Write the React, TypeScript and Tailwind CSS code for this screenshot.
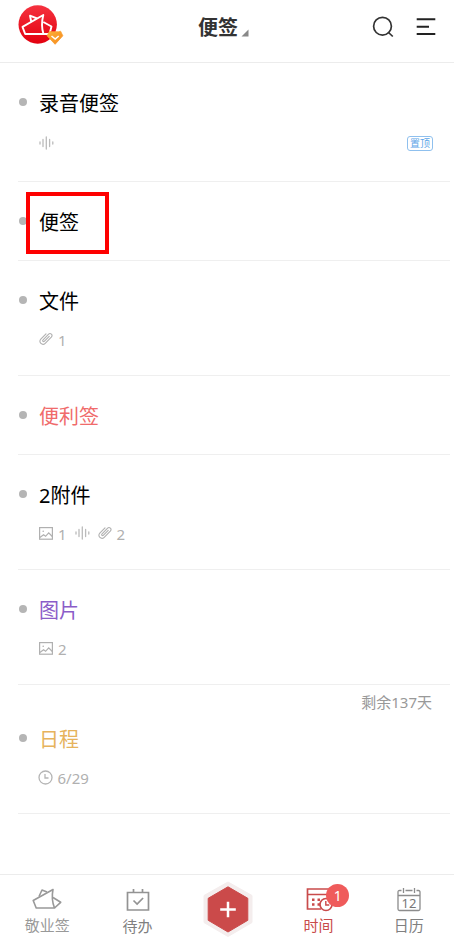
import React from "react";

type Meta = { kind: "image" | "voice" | "clip" | "clock"; text?: string };

type Note = {
  title: string;
  color: string;
  height: string;
  meta: Meta[];
  pinned?: boolean;
  marked?: boolean;
  remain?: string;
};

const notes: Note[] = [
  {
    title: "录音便签",
    color: "text-black",
    height: "h-[119px]",
    meta: [{ kind: "voice" }],
    pinned: true,
  },
  {
    title: "便签",
    color: "text-black",
    height: "h-[79px]",
    meta: [],
    marked: true,
  },
  {
    title: "文件",
    color: "text-black",
    height: "h-[115px]",
    meta: [{ kind: "clip", text: "1" }],
  },
  { title: "便利签", color: "text-[#f06b6b]", height: "h-[79px]", meta: [] },
  {
    title: "2附件",
    color: "text-black",
    height: "h-[115px]",
    meta: [
      { kind: "image", text: "1" },
      { kind: "voice" },
      { kind: "clip", text: "2" },
    ],
  },
  {
    title: "图片",
    color: "text-[#8a5cc8]",
    height: "h-[115px]",
    meta: [{ kind: "image", text: "2" }],
  },
  {
    title: "日程",
    color: "text-[#e6b35c]",
    height: "h-[129px]",
    meta: [{ kind: "clock", text: "6/29" }],
    remain: "剩余137天",
  },
];

const MetaIcon: React.FC<{ kind: Meta["kind"] }> = ({ kind }) => {
  if (kind === "voice") {
    return (
      <svg width="15" height="14" viewBox="0 0 15 14" fill="none" stroke="#bbb" strokeWidth="1.3" strokeLinecap="round">
        <path d="M1 6v2M4 3.5v7M7.3 1v12M10.6 3.5v7M13.8 6v2" />
      </svg>
    );
  }
  if (kind === "clip") {
    return (
      <svg width="14" height="14" viewBox="0 0 14 14" fill="none" stroke="#b0b0b0" strokeWidth="1.1" strokeLinecap="round">
        <path d="M10.200 4.300 5.500 9.200c-1.100 1.100-2.500-.2-1.400-1.400L9.400 2.300c2-2 4.900.6 2.900 2.800L6.200 11.300C3.400 14.200-1 10.200 1.800 7.200L7 1.900" />
      </svg>
    );
  }
  if (kind === "image") {
    return (
      <svg width="14" height="13" viewBox="0 0 14 13" fill="none" stroke="#b0b0b0" strokeWidth="1.200">
        <rect x="0.6" y="0.6" width="12.8" height="11.6" />
        <path d="M.8 10.600 4.600 7.800l2 1.500 3.100-3.500 3.600 3.700" />
        <circle cx="4.200" cy="4.200" r="0.800" fill="#b0b0b0" stroke="none" />
      </svg>
    );
  }
  return (
    <svg width="15" height="15" viewBox="0 0 15 15" fill="none" stroke="#b5b5b5" strokeWidth="1.300">
      <circle cx="7.500" cy="7.500" r="6.500" />
      <path d="M7 4v4h3.500" />
    </svg>
  );
};

const NoteRow: React.FC<{ note: Note }> = ({ note }) => {
  return (
    <li
      className={`relative ml-[18px] mr-1 border-b border-[#efefef] ${note.height} ${
        note.remain ? "pt-[6px]" : "pt-[26px]"
      }`}
    >
      {note.remain && (
        <p className="mr-[18px] h-[22px] text-right text-[15px] leading-[22px] text-[#999]">
          {note.remain}
        </p>
      )}
      <div className={`flex items-start ${note.remain ? "mt-[12px]" : ""}`}>
        <span className="ml-[0.5px] mt-[9px] size-2 rounded-full bg-[#b5b5b5]" />
        <h2 className={`ml-[12.5px] mt-px text-[20px] leading-7 ${note.color}`}>
          {note.title}
        </h2>
      </div>
      {note.meta.length > 0 && (
        <div
          className={`mr-[17px] flex h-5 items-center justify-between ${
            note.pinned ? "mt-[15px]" : "mt-[13px]"
          }`}
        >
          <div
            className={`flex items-center gap-2 text-[15px] leading-5 text-[#b0b0b0] ${
              note.meta[0].kind === "clock" ? "ml-[19.5px]" : "ml-[21px]"
            }`}
          >
            {note.meta.map((item, i) => (
              <span key={i} className="flex items-center gap-[5px]">
                <MetaIcon kind={item.kind} />
                {item.text && <span className="relative top-px">{item.text}</span>}
              </span>
            ))}
          </div>
          {note.pinned && (
            <span className="flex h-[15px] w-[26px] items-center justify-center rounded-[3px] border border-[#8fc0ee] text-[10px] leading-none text-[#5ea6e8]">
              置顶
            </span>
          )}
        </div>
      )}
      {note.marked && (
        <div className="absolute left-2 top-[10px] h-[62px] w-[83px] border-4 border-[#fe0000]" />
      )}
    </li>
  );
};

const Logo: React.FC = () => (
  <svg width="46" height="42" viewBox="0 0 46 42" fill="none">
    <defs>
      <linearGradient id="logo" x1="0" y1="0" x2="0" y2="1">
        <stop offset="0" stopColor="#f5323f" />
        <stop offset="1" stopColor="#e3000f" />
      </linearGradient>
      <linearGradient id="gem" x1="0" y1="0" x2="1" y2="1">
        <stop offset="0" stopColor="#fbb03a" />
        <stop offset="1" stopColor="#f78b1e" />
      </linearGradient>
    </defs>
    <circle cx="19.700" cy="19.500" r="19.200" fill="url(#logo)" />
    <g stroke="#fff" strokeWidth="1.900" strokeLinejoin="round">
      <path d="M25.300 10 4.500 21.800 7.200 29H25.500C24 24.500 23.500 17 25.300 10Z" />
      <path d="M13.200 16.500 12 10.700 19 13.500" />
      <path d="M25.300 17 33.500 21.500 31.500 29H25.500" />
    </g>
    <path d="m31.600 26.200 1.700.6h7.600l1.700-.6 2.200 4.600-7.700 8.500-8-8.500Z" fill="url(#gem)" stroke="url(#gem)" strokeWidth="0.800" strokeLinejoin="round" />
    <path d="m33.500 31 3.700 3 3.500-3" stroke="#fff" strokeWidth="1.600" />
  </svg>
);

const Header: React.FC = () => (
  <header className="relative flex h-[63px] items-start justify-between border-b border-[#ececec] px-[18px] pt-[5px]">
    <Logo />
    <h1 className="absolute left-[198px] top-[13px] flex items-end text-[20px] font-bold leading-[30px] text-[#333]">
      便签
      <svg className="mb-[6px] ml-[3px]" width="8" height="8" viewBox="0 0 8 8">
        <path d="M7.500.5v7h-7Z" fill="#888" />
      </svg>
    </h1>
    <div className="mt-[11px] flex items-start gap-[22px]">
      <svg width="22" height="22" viewBox="0 0 22 22" fill="none" stroke="#333" strokeWidth="1.700">
        <circle cx="10.500" cy="10.200" r="8.900" />
        <path d="m16 16 4.800 4.500" />
      </svg>
      <svg className="mt-px" width="20" height="20" viewBox="0 0 20 20" fill="none" stroke="#222" strokeWidth="1.900">
        <path d="M.7 2.200h18.600M.7 9.800h12.300M.7 17h18.600" />
      </svg>
    </div>
  </header>
);

const TabBar: React.FC = () => (
  <nav className="grid h-[66px] grid-cols-5 border-t border-[#ececec] pl-[2px] text-[15px] leading-5 text-[#808080]">
    <div className="flex flex-col items-center pt-[13px]">
      <svg width="30" height="23" viewBox="0 0 30 23" fill="none" stroke="#999" strokeWidth="1.600" strokeLinejoin="round">
        <path d="M21 1.500 1.200 12.500 4.200 20H22.500C20.500 15 19.500 9 21 1.500Z" />
        <path d="M7 8.500 10 2 15 4" />
        <path d="M21 9.500 28.700 14.300 22.500 20" />
      </svg>
      <span className="mt-[4px] text-[#999]">敬业签</span>
    </div>
    <div className="flex flex-col items-center pt-[13px]">
      <svg width="24" height="24" viewBox="0 0 24 24" fill="none" stroke="#939393" strokeWidth="1.700">
        <path d="M1.500 4.500h21v17.500h-21ZM7.500 1v4M16.500 1v4M7.500 12.500l3.600 3.500 6-6" />
      </svg>
      <span className="mt-[4px]">待办</span>
    </div>
    <div className="flex flex-col items-center pt-[6px]">
      <svg width="50" height="57" viewBox="0 0 50 57">
        <path d="m25 1 24 13.500v27L25 55.500 1 41.500v-27Z" fill="#f4eded" stroke="#f4eded" strokeLinejoin="round" />
        <path d="m25 5.800 19.800 11.500v22L25 51 5.200 39.300v-22Z" fill="#cb4a4a" stroke="#cb4a4a" strokeLinejoin="round" />
        <path d="M17.200 28.500h15.600M25 20.800v15.400" stroke="#fff" strokeWidth="2.500" />
      </svg>
    </div>
    <div className="relative flex flex-col items-center pt-[12px] text-[#c94b4b]">
      <svg className="ml-[4px]" width="28" height="25" viewBox="0 0 28 25" fill="none" stroke="#c94b4b" strokeWidth="1.700">
        <path d="M15 22H1.500V2H23v9M1.500 7.500H23" />
        <path d="M6 12.800h2.500M11.500 12.800h2.500M6 17.500h2.500M11.500 17.500h2.500" strokeWidth="2.500" />
        <circle cx="20" cy="17.500" r="6" fill="#fff" />
        <path d="M19.800 14v4h3.500" strokeWidth="1.400" />
      </svg>
      <span className="mt-[3px]">时间</span>
      <span className="absolute left-[53px] top-[9px] flex size-[23px] items-center justify-center rounded-full bg-[#ef5b5b] text-[14px] leading-none text-white">
        1
      </span>
    </div>
    <div className="flex flex-col items-center pt-[12px]">
      <svg width="24" height="26" viewBox="0 0 24 26" fill="none" stroke="#8c8c8c" strokeWidth="1.300">
        <path d="M4.500 3.500H2.500Q1 3.500 1 5v17q0 1.500 1.500 1.500h19q1.500 0 1.500-1.500V5q0-1.500-1.500-1.500h-2M8.500 3.500h7M6.500 1v5M17.500 1v5M1 8.500h22" />
        <text x="12" y="20.800" textAnchor="middle" fontSize="13" fill="#777" stroke="none">
          12
        </text>
      </svg>
      <span className="mt-[2px]">日历</span>
    </div>
  </nav>
);

const App: React.FC = () => {
  return (
    <div className="flex h-[940px] w-[454px] flex-col overflow-hidden bg-white font-['Noto_Sans','Noto_Sans_CJK_SC',sans-serif]">
      <Header />
      <ul className="flex-1">
        {notes.map((note) => (
          <NoteRow key={note.title} note={note} />
        ))}
      </ul>
      <TabBar />
    </div>
  );
};

export default App;
